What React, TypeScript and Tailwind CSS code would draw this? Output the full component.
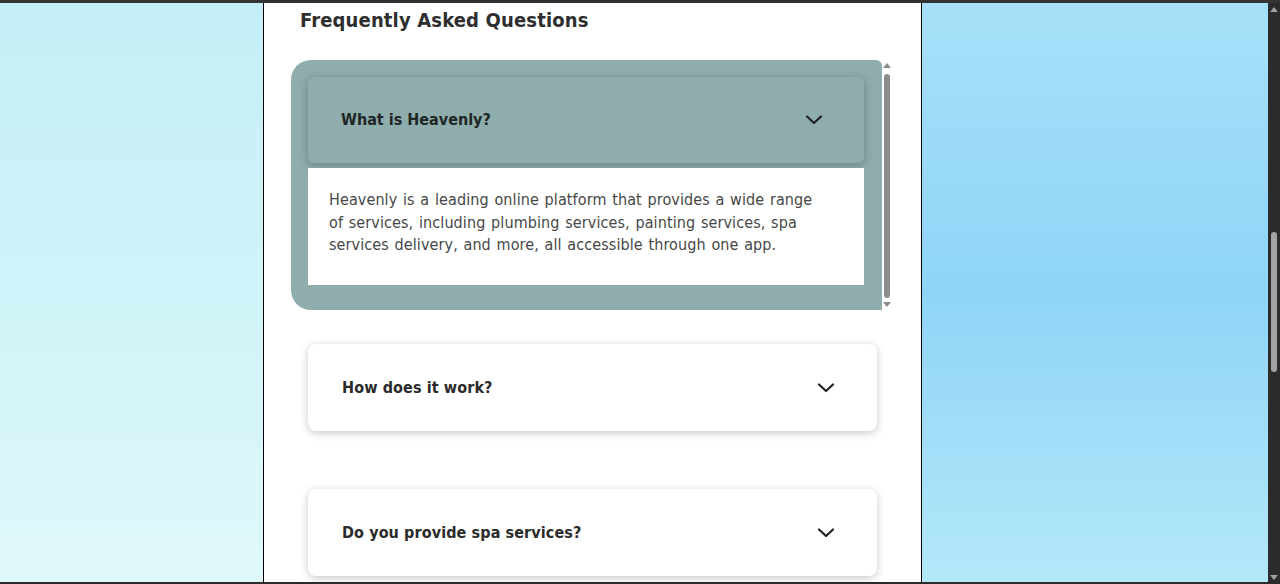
import { ReactNode } from "react";

const font = { fontFamily: '"DejaVu Sans", "Liberation Sans", sans-serif' };

function Chevron() {
  return (
    <svg width="18" height="10" viewBox="0 0 18 10" fill="none" className="shrink-0">
      <path d="M2 1.5 L9 8 L16 1.5" stroke="#222" strokeWidth="2.2" strokeLinecap="round" strokeLinejoin="round" />
    </svg>
  );
}

function QuestionCard({ q, className }: { q: string; className?: string }) {
  return (
    <div className={"w-[569px] h-[87px] bg-white rounded-lg shadow-[0_2px_9px_rgba(0,0,0,0.22)] flex items-center justify-between pl-[34px] pr-[42px] " + (className ?? "")}>
      <span className="text-[16px] font-bold text-[#2b2b2b] font-stretch-condensed tracking-[0.1px]">{q}</span>
      <Chevron />
    </div>
  );
}

function FakeScrollbar({ children }: { children?: ReactNode }) {
  return (
    <div className="w-[10px] h-full flex flex-col items-center py-[3px]">
      <div className="w-0 h-0 border-l-[4px] border-r-[4px] border-b-[5px] border-l-transparent border-r-transparent border-b-[#8a8a8a]" />
      <div className="flex-1 w-[6px] mt-[6px] mb-[4px] rounded-full bg-[#8c8c8c]" />
      <div className="w-0 h-0 border-l-[4px] border-r-[4px] border-t-[5px] border-l-transparent border-r-transparent border-t-[#8a8a8a]" />
      {children}
    </div>
  );
}

export default function App() {
  return (
    <div className="w-[1280px] h-[584px] flex flex-col overflow-hidden bg-[#2b2b2b]" style={font}>
      <div className="h-[3px] bg-[#333]" />
      <div className="flex-1 flex min-h-0">
        <div className="w-[263px] bg-gradient-to-b from-[#c4eff6] via-[#cff3f8] to-[#e0f8fa]" />
        <div className="w-px bg-black" />
        <div className="w-[657px] bg-white flex flex-col">
          <h2 className="pl-[36px] pt-[4px] h-[33px] text-[20px] leading-[26px] font-bold text-[#2e2e2e] font-stretch-condensed tracking-[0.15px]">
            Frequently Asked Questions
          </h2>
          <div className="ml-[27px] mt-[24px] h-[250px] flex">
            <div className="w-[591px] h-full bg-[#8fadac] rounded-l-[20px] rounded-tr-[6px] pt-[17px] pl-[17px] pr-[18px]">
              <div className="h-[86px] bg-[#8fadac] rounded-md shadow-[0_2px_8px_rgba(0,0,0,0.25)] flex items-center justify-between pl-[33px] pr-[41px]">
                <span className="text-[16px] font-bold text-[#1f2626] font-stretch-condensed">What is Heavenly?</span>
                <Chevron />
              </div>
              <div className="mt-[5px] h-[117px] bg-white pl-[21px] pt-[21px]">
                <p className="w-[491px] text-[16px] leading-[22.5px] text-[#474747] font-stretch-condensed tracking-[0.1px] [word-spacing:1px]">
                  Heavenly is a leading online platform that provides a wide range of services, including plumbing services, painting services, spa services delivery, and more, all accessible through one app.
                </p>
              </div>
            </div>
            <FakeScrollbar />
          </div>
          <QuestionCard q="How does it work?" className="ml-[44px] mt-[34px]" />
          <QuestionCard q="Do you provide spa services?" className="ml-[44px] mt-[58px]" />
        </div>
        <div className="w-px bg-black" />
        <div className="flex-1 bg-gradient-to-b from-[#a6e1f8] via-[#8fd4f7] to-[#b3e8f8]" />
        <div className="w-[12px] bg-[#2b2b2b] flex flex-col items-center">
          <div className="mt-[4px] w-0 h-0 border-l-[4px] border-r-[4px] border-b-[5px] border-l-transparent border-r-transparent border-b-[#a0a0a0]" />
          <div className="mt-[220px] w-[6px] h-[140px] rounded-full bg-[#a3a3a3]" />
          <div className="mt-auto mb-[2px] w-0 h-0 border-l-[4px] border-r-[4px] border-t-[5px] border-l-transparent border-r-transparent border-t-[#a0a0a0]" />
        </div>
      </div>
      <div className="h-[2px] bg-[#2b2b2b]" />
    </div>
  );
}
